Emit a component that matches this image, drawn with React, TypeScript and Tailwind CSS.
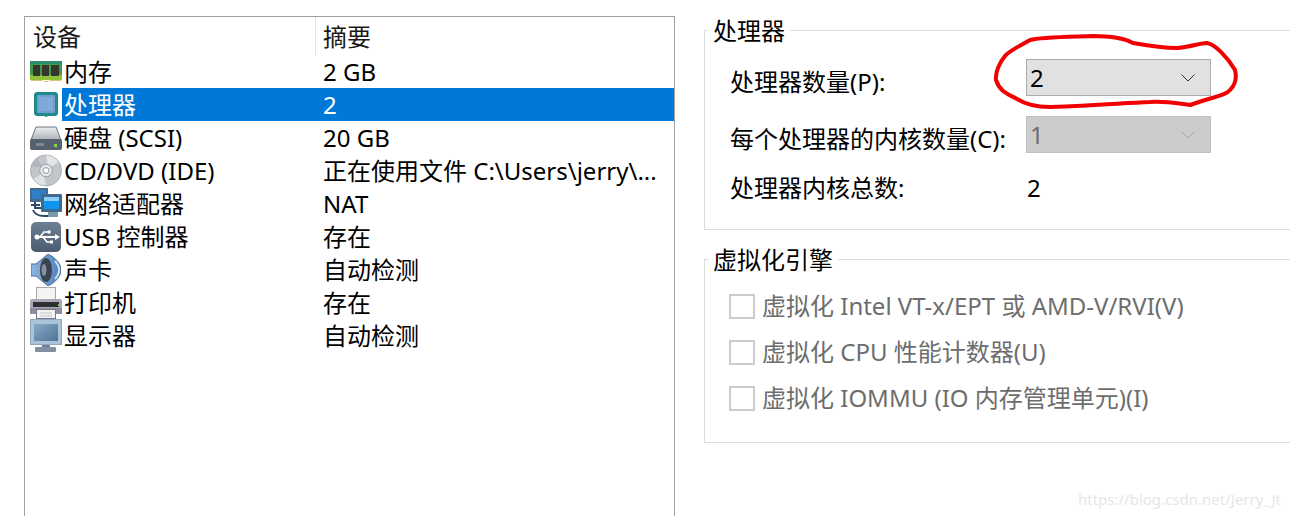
const font = { fontFamily: '"Noto Sans", "Noto Sans CJK SC", sans-serif' }

function MemoryIcon() {
  return (
    <svg width="32" height="21" viewBox="0 0 32 21">
      <rect x="0" y="0" width="32" height="18" fill="#3f9a4c" />
      <rect x="0" y="0" width="32" height="3" fill="#2c8f6a" />
      <rect x="0" y="14" width="32" height="5" fill="#8fc23a" />
      <rect x="3" y="4" width="7" height="11" fill="#35372f" />
      <rect x="12" y="4" width="7" height="11" fill="#35372f" />
      <rect x="21" y="4" width="8" height="11" fill="#35372f" />
      <path d="M1 19h11l2 2h4l2-2h11v1H1z" fill="#d8c27a" />
    </svg>
  )
}

function CpuIcon() {
  return (
    <svg width="24" height="25" viewBox="0 0 24 25">
      <path d="M2 0h20l2 2v20l-2 2H14l-2 1-2-1H2l-2-2V2z" fill="#1f8a8c" />
      <rect x="3" y="3" width="18" height="18" rx="1" fill="#6f9fd0" />
      <rect x="5" y="5" width="14" height="14" fill="#7fa9d6" />
    </svg>
  )
}

function DiskIcon() {
  return (
    <svg width="32" height="24" viewBox="0 0 32 24">
      <defs>
        <linearGradient id="disk-top" x1="0" y1="0" x2="0" y2="1">
          <stop offset="0" stopColor="#eef0f2" />
          <stop offset="1" stopColor="#aab1b8" />
        </linearGradient>
      </defs>
      <path d="M6 1h20l5 13H1z" fill="url(#disk-top)" stroke="#6d7680" />
      <rect x="0" y="13" width="32" height="11" rx="2" fill="#566170" />
      <rect x="6" y="17" width="8" height="3" fill="#808a94" />
      <rect x="24" y="18" width="3" height="3" fill="#8ed04c" />
    </svg>
  )
}

function DiscIcon() {
  return (
    <svg width="33" height="33" viewBox="0 0 33 33">
      <circle cx="16.500" cy="16.500" r="16" fill="#c2c6cb" stroke="#a9adb2" />
      <path d="M16.500 1a15.500 15.500 0 0 1 13 7L19 14z" fill="#e4e6e9" />
      <path d="M16.500 32a15.500 15.500 0 0 1-13-7L14 19z" fill="#dfe1e4" />
      <path d="M1.500 12a15.500 15.500 0 0 1 6-8L14 14z" fill="#b2b6bc" />
      <circle cx="16.500" cy="16.500" r="6.500" fill="#e4e6e9" stroke="#9a9ea3" />
      <circle cx="16.500" cy="16.500" r="3" fill="#fff" stroke="#8f9398" />
    </svg>
  )
}

function NetworkIcon() {
  return (
    <svg width="32" height="31" viewBox="0 0 32 31">
      <rect x="0" y="0" width="18" height="14" fill="#44698c" />
      <rect x="2" y="2" width="14" height="9" fill="#2f7fc8" />
      <path d="M5 14v6h7M1 17h9" fill="none" stroke="#2a4a68" strokeWidth="2" />
      <rect x="11" y="6" width="21" height="18" rx="1" fill="#3f6a90" />
      <rect x="14" y="9" width="15" height="12" fill="#0f96ee" />
      <rect x="14" y="9" width="15" height="4" fill="#8ccdf5" />
      <path d="M3 22c2 5 8 6 11 6h6" fill="none" stroke="#2a4a68" strokeWidth="2" />
      <rect x="18" y="24" width="10" height="5" fill="#7d97ad" />
    </svg>
  )
}

function UsbIcon() {
  return (
    <svg width="30" height="30" viewBox="0 0 30 30">
      <defs>
        <linearGradient id="usb-bg" x1="0" y1="0" x2="0" y2="1">
          <stop offset="0" stopColor="#6d7f95" />
          <stop offset="1" stopColor="#4a5b72" />
        </linearGradient>
      </defs>
      <rect x="0" y="0" width="30" height="30" rx="5" fill="url(#usb-bg)" />
      <path d="M6 15h18" stroke="#fff" strokeWidth="2" />
      <path d="M24 12l5 3-5 3z" fill="#fff" />
      <circle cx="6" cy="15" r="2.500" fill="#fff" />
      <path d="M9 15l4-5h4M12 15l4 5h4" fill="none" stroke="#fff" strokeWidth="1.600" />
      <circle cx="18" cy="10" r="1.800" fill="#fff" />
      <rect x="19" y="18.500" width="3" height="3" fill="#fff" />
    </svg>
  )
}

function SpeakerIcon() {
  return (
    <svg width="30" height="32" viewBox="0 0 30 32">
      <defs>
        <linearGradient id="speaker-bg" x1="0" y1="0" x2="1" y2="0">
          <stop offset="0" stopColor="#8fb6e2" />
          <stop offset="1" stopColor="#4f80bb" />
        </linearGradient>
      </defs>
      <path d="M0 10h5L17 0c8 4 13 10 13 16s-5 12-13 16L5 22H0z" fill="url(#speaker-bg)" stroke="#4a6f9c" />
      <ellipse cx="15" cy="16" rx="6" ry="12" fill="#39424e" />
      <ellipse cx="13" cy="16" rx="2.500" ry="6" fill="#8791a0" />
      <path d="M24 7c3 3 4 6 4 9s-1 6-4 9" fill="none" stroke="#cfe0f2" strokeWidth="2" />
    </svg>
  )
}

function PrinterIcon() {
  return (
    <svg width="32" height="32" viewBox="0 0 32 32">
      <rect x="6.500" y="0.500" width="19" height="13" fill="#f4f4f4" stroke="#a8a8ac" />
      <rect x="0" y="12" width="32" height="15" rx="2" fill="#a7a9b5" />
      <rect x="3" y="15" width="26" height="5" fill="#2e2e33" />
      <rect x="28" y="17" width="2" height="2" fill="#6fd04c" />
      <rect x="0" y="21" width="32" height="6" fill="#8d8fa0" />
      <rect x="6.500" y="22.500" width="19" height="9" fill="#f2f2f2" stroke="#77798a" />
      <path d="M10 26h12M10 29h12" stroke="#c2c2c8" />
    </svg>
  )
}

function MonitorIcon() {
  return (
    <svg width="32" height="33" viewBox="0 0 32 33">
      <defs>
        <linearGradient id="screen-bg" x1="0" y1="0" x2="1" y2="1">
          <stop offset="0" stopColor="#8aa9c6" />
          <stop offset="1" stopColor="#4d7396" />
        </linearGradient>
      </defs>
      <rect x="0.500" y="0.500" width="31" height="25" fill="#a9c3da" stroke="#8ea8bf" />
      <rect x="4" y="5" width="24" height="17" fill="url(#screen-bg)" />
      <rect x="12" y="26" width="8" height="3" fill="#6f8295" />
      <rect x="5" y="28" width="21" height="5" rx="1" fill="#80909f" />
    </svg>
  )
}

const devices = [
  { icon: <MemoryIcon />, name: '内存', summary: '2 GB' },
  { icon: <CpuIcon />, name: '处理器', summary: '2', selected: true },
  { icon: <DiskIcon />, name: '硬盘 (SCSI)', summary: '20 GB' },
  { icon: <DiscIcon />, name: 'CD/DVD (IDE)', summary: '正在使用文件 C:\\Users\\jerry\\...' },
  { icon: <NetworkIcon />, name: '网络适配器', summary: 'NAT' },
  { icon: <UsbIcon />, name: 'USB 控制器', summary: '存在' },
  { icon: <SpeakerIcon />, name: '声卡', summary: '自动检测' },
  { icon: <PrinterIcon />, name: '打印机', summary: '存在' },
  { icon: <MonitorIcon />, name: '显示器', summary: '自动检测' },
]

function Chevron({ color }: { color: string }) {
  return (
    <svg width="14" height="8" viewBox="0 0 14 8" fill="none" stroke={color} strokeWidth="1">
      <path d="M0.500 0.500L7 7L13.500 0.500" />
    </svg>
  )
}

function Combo({ value, disabled }: { value: string; disabled?: boolean }) {
  return (
    <div
      className={`flex h-[37px] w-[185px] items-center justify-between border pl-[3px] pr-[15px] ${
        disabled
          ? 'border-[#bfbfbf] bg-[#cccccc] text-[#6d6d6d]'
          : 'border-[#adadad] bg-[#e1e1e1] text-black'
      }`}
    >
      <span>{value}</span>
      <Chevron color={disabled ? '#a0a0a0' : '#333333'} />
    </div>
  )
}

function GroupBox({ title, className, children }: { title: string; className: string; children: React.ReactNode }) {
  return (
    <div className={`relative w-[620px] border border-[#dcdcdc] ${className}`}>
      <span className="absolute -top-[15px] left-[3px] bg-white px-[5px] leading-[30px]">{title}</span>
      {children}
    </div>
  )
}

function VirtOption({ label }: { label: string }) {
  return (
    <div className="flex h-[46px] items-center gap-[7px] text-[#6d6d6d]">
      <div className="h-[25px] w-[26px] border-2 border-[#cccccc] bg-white" />
      <span>{label}</span>
    </div>
  )
}

export default function App() {
  return (
    <div className="relative flex h-[516px] w-[1290px] overflow-hidden bg-white text-[24px] text-black" style={font}>
      {/* Device list */}
      <div className="ml-[24px] mt-[16px] h-[520px] w-[651px] shrink-0 border border-[#a0a0a0] pl-[5px]">
        <div className="flex h-[38px] items-center pl-[3px] text-[#1a1a1a]">
          <span className="w-[282px] pt-[2px]">设备</span>
          <span className="h-[38px] border-l border-[#e5e5e5] pl-[7px] leading-[40px]">摘要</span>
        </div>
        {devices.map((d) => (
          <div key={d.name} className="flex h-[33px] items-center">
            <div className="flex w-[32px] shrink-0 items-center justify-center">{d.icon}</div>
            <div className={`flex h-[33px] flex-1 items-center pl-[2px] ${d.selected ? 'bg-[#0078d7] text-white' : ''}`}>
              <span className="w-[259px] whitespace-nowrap">{d.name}</span>
              <span className="whitespace-nowrap">{d.summary}</span>
            </div>
          </div>
        ))}
      </div>

      {/* Processor settings */}
      <div className="ml-[29px] flex flex-col pt-[30px]">
        <GroupBox title="处理器" className="h-[200px]">
          <div className="flex flex-col pl-[25px] pt-[28px]">
            <div className="flex h-[37px] items-center">
              <span className="w-[296px] whitespace-nowrap pt-[8px]">处理器数量(P):</span>
              <Combo value="2" />
            </div>
            <div className="mt-[20px] flex h-[37px] items-center">
              <span className="w-[296px] whitespace-nowrap pt-[8px]">每个处理器的内核数量(C):</span>
              <Combo value="1" disabled />
            </div>
            <div className="mt-[17px] flex h-[35px] items-center">
              <span className="w-[297px] whitespace-nowrap">处理器内核总数:</span>
              <span>2</span>
            </div>
          </div>
        </GroupBox>
        <GroupBox title="虚拟化引擎" className="mt-[29px] h-[184px]">
          <div className="flex flex-col pl-[24px] pt-[23px]">
            <VirtOption label="虚拟化 Intel VT-x/EPT 或 AMD-V/RVI(V)" />
            <VirtOption label="虚拟化 CPU 性能计数器(U)" />
            <VirtOption label="虚拟化 IOMMU (IO 内存管理单元)(I)" />
          </div>
        </GroupBox>
      </div>

      {/* Hand-drawn annotation */}
      <svg className="absolute left-0 top-0" width="1290" height="516" fill="none">
        <path
          d="M1030 40C1040 37 1060 37 1093 36C1108 36 1122 37 1133 43C1150 46 1165 48 1177 48C1190 47 1200 43 1207 43C1215 44 1228 58 1235 70C1237 78 1235 85 1230 90C1225 96 1215 96 1190 105C1175 103 1165 101 1150 102C1125 103 1100 105 1050 107C1035 107 1025 104 1017 99C1008 94 1000 92 996 80C995 72 1000 62 1005 56C1010 50 1020 46 1030 40Z"
          stroke="#f00000"
          strokeWidth="4"
        />
      </svg>

      <span className="absolute left-[1078px] top-[488px] text-[15px] text-[#e6e6e6]">https://blog.csdn.net/Jerry_Jt</span>
    </div>
  )
}
